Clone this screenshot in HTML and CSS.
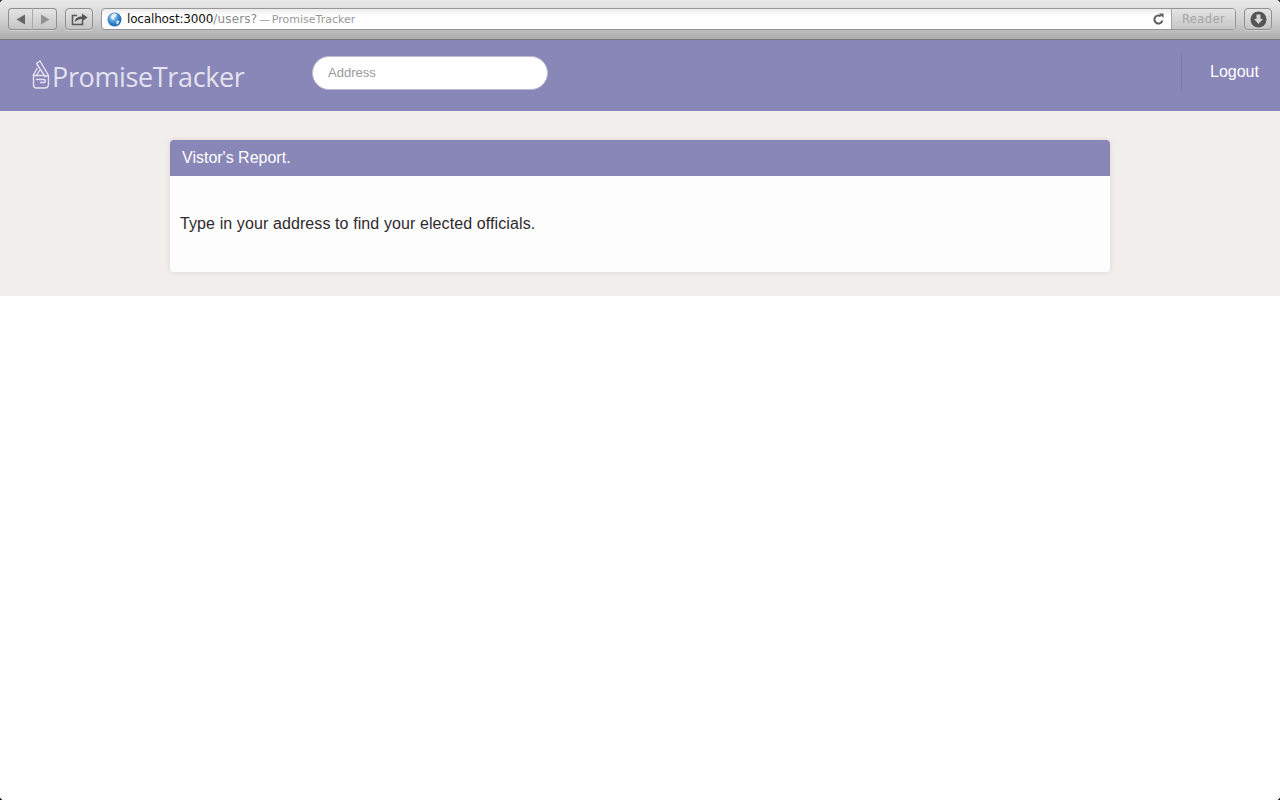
FILE: index.html
```html
<!DOCTYPE html>
<html lang="en">
<head>
<meta charset="utf-8">
<title>PromiseTracker</title>
<link rel="stylesheet" href="styles.css">
</head>
<body>
<div class="chrome">
  <div class="btn-group">
    <button class="tool seg" aria-label="Back"><svg width="10" height="11" viewBox="0 0 10 11"><path d="M9 .5v10L.5 5.500z" fill="#666"/></svg></button>
    <button class="tool seg" aria-label="Forward"><svg width="10" height="11" viewBox="0 0 10 11"><path d="M1 .5v10l8.500-5z" fill="#929292"/></svg></button>
  </div>
  <button class="tool share" aria-label="Share"><svg width="18" height="14" viewBox="0 0 18 14"><path d="M7 3.500H2.500v9h10V9" fill="none" stroke="#5a5a5a" stroke-width="1.600"/><path d="M5 10c0-4 3-5.500 7-5.500V1.500L17.500 5.500 12 9.500V7c-3 0-5 1-7 3z" fill="#555"/></svg></button>
  <div class="address">
    <svg class="globe" width="15" height="15" viewBox="0 0 15 15"><defs><radialGradient id="g" cx=".4" cy=".35" r=".75"><stop offset="0" stop-color="#a9d3f2"/><stop offset=".6" stop-color="#2f7fc9"/><stop offset="1" stop-color="#1a5ca5"/></radialGradient></defs><circle cx="7.500" cy="7.500" r="7" fill="url(#g)"/><path d="M5 2c2-1 4-.5 5 .5L9 5 7 5.500 7.500 8 5.500 7.500 3.500 5.500zM9.500 8.500l3 .5-1.500 3-1.500.5z" fill="#e4eef5"/></svg>
    <span class="url">localhost:3000</span><span class="path">/users?</span><span class="page-title">— PromiseTracker</span>
    <svg class="reload" width="13" height="13" viewBox="0 0 13 13"><path d="M10.300 7.500A4 4 0 1 1 8.800 3.300" fill="none" stroke="#5c5c5c" stroke-width="2"/><path d="M7 .5l4.500 0v4.500z" fill="#5c5c5c"/></svg>
    <span class="reader">Reader</span>
  </div>
  <button class="tool download" aria-label="Downloads"><svg width="17" height="17" viewBox="0 0 17 17"><circle cx="8.500" cy="8.500" r="8" fill="#555"/><path d="M6.500 3.500h4v4.500h2.500l-4.500 5-4.500-5h2.500z" fill="#d5d5d5"/></svg></button>
</div>
<header class="topbar">
  <a class="logo">
    <svg class="hand" width="19" height="30" viewBox="0 0 19 30"><g fill="none" stroke="#e3e2f0" stroke-width="1.400" stroke-linejoin="round" stroke-linecap="round"><path d="M2.500 15V25c0 2 1 3 3 3h8c2.500 0 4-1.500 4-4V16.500"/><path d="M5.500 3.500 9 1 17.500 15.500 14 16.500z"/><path d="M2.500 15 6 8.500"/><path d="M5.500 15.500 8.500 10.500"/><path d="M2.500 15.500H14"/><path d="M5.500 19.500H13c1.800 0 1.800 3 0 3H9.500"/></g></svg>
    <span class="logo-text">PromiseTracker</span>
  </a>
  <input class="search" type="text" placeholder="Address">
  <nav class="nav"><a class="logout">Logout</a></nav>
</header>
<main class="hero">
  <section class="card">
    <h2 class="card-head">Vistor's Report.</h2>
    <div class="card-body"><p class="lead">Type in your address to find your elected officials.</p></div>
  </section>
</main>
<i class="corner tl"></i><i class="corner tr"></i><i class="corner bl"></i><i class="corner br"></i>
</body>
</html>
```
FILE: styles.css
```css
* { box-sizing: border-box; }
html, body { margin: 0; background: #fff; }
body { font-family: "Liberation Sans", Arial, sans-serif; height: 800px; overflow: hidden; position: relative; }
.chrome {
  height: 40px;
  display: flex;
  align-items: flex-start;
  gap: 8px;
  padding: 8px 8px 0;
  background: linear-gradient(#e9e9e9, #d2d2d2 50%, #adadad);
  border-bottom: 1px solid #7a7a7a;
}
.tool {
  height: 22px;
  padding: 0;
  display: flex;
  align-items: center;
  justify-content: center;
  border: 1px solid #8f8f8f;
  border-radius: 4px;
  background: linear-gradient(#e4e4e4, #c6c6c6);
  box-shadow: 0 1px 0 rgba(255,255,255,.35);
}
.btn-group { display: flex; }
.seg { width: 25px; }
.seg:first-child { border-radius: 4px 0 0 4px; border-right-color: #aaa; }
.seg:last-child { width: 24px; border-radius: 0 4px 4px 0; border-left: 0; }
.share { width: 28px; }
.download { width: 28px; }
.address {
  flex: 1;
  height: 22px;
  display: flex;
  align-items: center;
  padding-left: 5px;
  border: 1px solid #969696;
  border-radius: 4px;
  overflow: hidden;
  background: linear-gradient(#ececec, #fff 35%, #fff);
  font-family: "DejaVu Sans", sans-serif;
  font-size: 12px;
}
.globe { margin-right: 5px; }
.url { color: #111; letter-spacing: -.16px; }
.path { color: #8b8b8b; letter-spacing: .18px; }
.page-title { color: #999; font-size: 11px; margin-left: 2px; word-spacing: -2px; }
.reload { margin-left: auto; margin-right: 6px; }
.reader {
  width: 64px;
  height: 100%;
  display: flex;
  align-items: center;
  justify-content: center;
  color: #a5a5a5;
  font-size: 11.500px;
  letter-spacing: .4px;
  border-left: 1px solid #a5a5a5;
  background: linear-gradient(#e4e4e4, #c6c6c6);
}
.topbar {
  height: 71px;
  display: flex;
  align-items: flex-start;
  background: #8986b8;
}
.logo { display: flex; align-items: flex-start; margin: 20px 0 0 31px; width: 281px; }
.hand { flex: none; }
.logo-text {
  font-family: "Open Sans", sans-serif;
  font-size: 27px;
  line-height: 33px;
  color: #e3e2f0;
  margin-left: 2px;
  letter-spacing: -.36px;
}
.search {
  width: 236px;
  height: 34px;
  margin-top: 16px;
  padding: 0 15px 2px;
  border: 1px solid #bdbbd2;
  border-radius: 17px;
  background: #fff;
  font: 13px "Liberation Sans", Arial, sans-serif;
}
.search::placeholder { color: #999; opacity: 1; }
.nav {
  margin: 12px 0 0 auto;
  height: 40px;
  width: 99px;
  border-left: 1px solid #7b78a8;
  padding: 10px 0 0 28px;
}
.logout { color: #fff; font-size: 16px; line-height: 20px; }
.hero {
  height: 185px;
  padding: 29px 170px 0;
  background: #f2eeeb;
}
.card {
  height: 132px;
  border-radius: 4px;
  overflow: hidden;
  background: #fdfdfd;
  box-shadow: 0 0 5px rgba(120,100,90,.18);
}
.card-head {
  margin: 0;
  height: 36px;
  padding: 0 12px;
  background: #8986b8;
  color: #fff;
  font-size: 16px;
  font-weight: 400;
  line-height: 36px;
}
.card-body { padding: 37px 10px 0; }
.lead { margin: 0; font-size: 16px; line-height: 22px; color: #2f2a2e; letter-spacing: .1px; }
.corner { position: absolute; width: 3px; height: 3px; }
.tl { top: 0; left: 0; background: radial-gradient(circle at 3px 3px, transparent 2.500px, #333 3px); }
.tr { top: 0; right: 0; background: radial-gradient(circle at 0 3px, transparent 2.500px, #333 3px); }
.bl { bottom: 0; left: 0; background: radial-gradient(circle at 3px 0, transparent 2.500px, #222 3px); }
.br { bottom: 0; right: 0; background: radial-gradient(circle at 0 0, transparent 2.500px, #222 3px); }
```
